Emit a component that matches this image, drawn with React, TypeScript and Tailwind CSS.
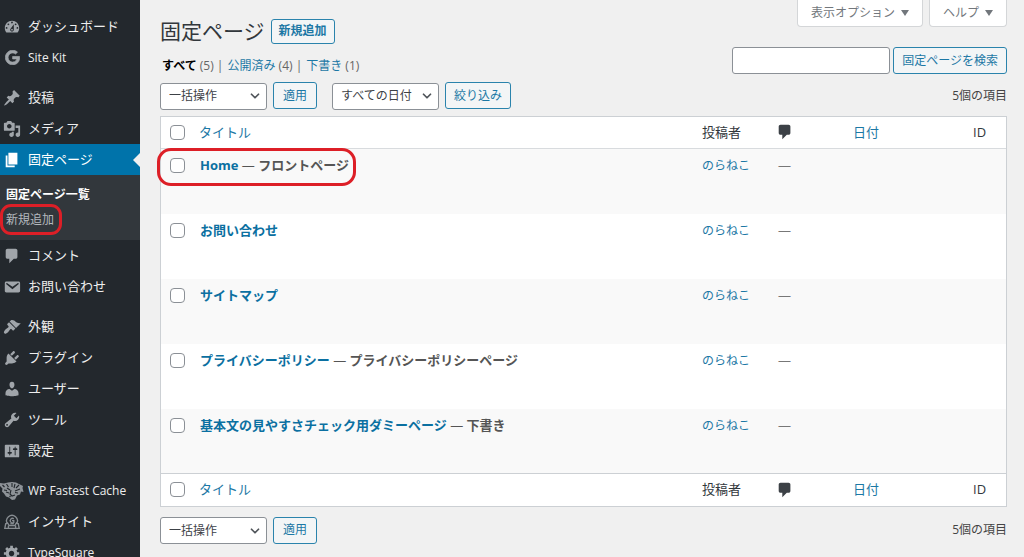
import { useState, type ReactNode } from "react";
import { ChevronDown } from "lucide-react";
import { FaGoogle } from "react-icons/fa";

type MenuItem = {
  label: string;
  icon: ReactNode;
  gap?: boolean;
  latin?: boolean;
  active?: boolean;
  children?: string[];
};

type PageRow = {
  title: string;
  state?: string;
  author: string;
  marked?: boolean;
};

const Dashicon = ({ d, className = "size-[18px]" }: { d: string; className?: string }) => (
  <svg viewBox="0 0 20 20" className={className} fill="currentColor" fillRule="evenodd" aria-hidden="true">
    <path d={d} />
  </svg>
);

const commentPath =
  "M5 2h9c1.1 0 2 .9 2 2v7c0 1.1-.9 2-2 2h-2l-5 5v-5H5c-1.1 0-2-.9-2-2V4c0-1.1.9-2 2-2z";

const TigerIcon = () => (
  <svg viewBox="0 0 24 20" className="h-5 w-6 shrink-0" aria-hidden="true">
    <path
      d="M0 2l4 .5L8 1.5 12 1l4 .5 3 1.5 4 2-.5 2 1 4-2.5-.5-1 3-3 1-2 4-3 .5-3-2.5-3-1-2-3-2-2 .5-3L0 5z"
      fill="currentColor"
      opacity=".85"
    />
    <path
      d="M2.500 4l2 2M4 9l3 .5M6.500 3l2 3M7 7l3 2M9 12l-3-1M12 2v4M15 3l-1 4M19 4l-3 3M20 8l-5 2M18 12l-3-.5M11 9l-1 4 2 2 3-1M9.500 16l1-1"
      fill="none"
      stroke="#23282d"
      strokeWidth="1.100"
    />
  </svg>
);

const InsightIcon = () => (
  <svg viewBox="0 0 20 20" className="size-[18px]" fill="none" stroke="currentColor" strokeWidth="1.5" opacity=".8" aria-hidden="true">
    <path d="M5 12a6 6 0 1 1 10 0M2 17l1-5 2-1 2 3h6l2-3 2 1 1 5zM6 17v-3M14 17v-3" />
    <path d="M12 6.500a2.500 2.500 0 1 0 0 4V8.500h-2M8 12h4" />
  </svg>
);

const menu: MenuItem[] = [
  {
    label: "ダッシュボード",
    icon: (
      <Dashicon d="M3.76 16h12.48c1.1-1.37 1.76-3.11 1.76-5 0-4.42-3.58-8-8-8s-8 3.58-8 8c0 1.89.66 3.63 1.76 5zM10 4c.55 0 1 .45 1 1s-.45 1-1 1-1-.45-1-1 .45-1 1-1zM6 6c.55 0 1 .45 1 1s-.45 1-1 1-1-.45-1-1 .45-1 1-1zm8 0c.55 0 1 .45 1 1s-.45 1-1 1-1-.45-1-1 .45-1 1-1zm-5.37 5.55L12 7v6c0 1.1-.9 2-2 2s-2-.9-2-2c0-.57.24-1.08.63-1.45zM4 10c.55 0 1 .45 1 1s-.45 1-1 1-1-.45-1-1 .45-1 1-1zm12 0c.55 0 1 .45 1 1s-.45 1-1 1-1-.45-1-1 .45-1 1-1zm-5 3c0-.55-.45-1-1-1s-1 .45-1 1 .45 1 1 1 1-.45 1-1z" />
    ),
  },
  {
    label: "Site Kit",
    latin: true,
    icon: (
      <FaGoogle className="size-[15px]" stroke="currentColor" strokeWidth={24} />
    ),
  },
  {
    label: "投稿",
    gap: true,
    icon: (
      <Dashicon d="M10.44 3.02l1.82-1.82 6.36 6.35-1.83 1.82c-1.05-.68-2.48-.57-3.41.36l-.75.75c-.92.93-1.04 2.35-.35 3.41l-1.83 1.82-2.41-2.41-2.8 2.79c-.42.42-3.38 2.71-3.8 2.29s1.86-3.39 2.28-3.81l2.79-2.79L4.1 9.36l1.83-1.82c1.05.69 2.48.57 3.4-.36l.75-.75c.93-.92 1.05-2.35.36-3.41z" />
    ),
  },
  {
    label: "メディア",
    icon: (
      <Dashicon d="M13 11V4c0-.55-.45-1-1-1h-1.67L9 1H5L3.67 3H2c-.55 0-1 .45-1 1v7c0 .55.45 1 1 1h10c.55 0 1-.45 1-1zM7 4.5c1.38 0 2.5 1.12 2.5 2.5S8.38 9.5 7 9.5 4.5 8.38 4.5 7 5.62 4.5 7 4.5zM14 6h5v10.5c0 1.38-1.12 2.5-2.5 2.5S14 17.88 14 16.5s1.12-2.5 2.5-2.5c.17 0 .34.02.5.05V9h-3V6zm-4 8.05V13h2v3.5c0 1.38-1.12 2.5-2.5 2.5S7 17.88 7 16.5 8.12 14 9.5 14c.17 0 .34.02.5.05z" />
    ),
  },
  {
    label: "固定ページ",
    active: true,
    children: ["固定ページ一覧", "新規追加"],
    icon: <Dashicon d="M6 15V2h10v13H6zm-1 1h8v2H3V5h2v11z" />,
  },
  { label: "コメント", icon: <Dashicon d={commentPath} /> },
  {
    label: "お問い合わせ",
    icon: (
      <Dashicon d="M3.87 4h13.25C18.37 4 19 4.59 19 5.79v8.42c0 1.19-.63 1.79-1.88 1.79H3.87c-1.25 0-1.88-.6-1.88-1.79V5.79c0-1.2.63-1.79 1.88-1.79zm6.62 8.6l6.74-5.53c.24-.2.43-.66.13-1.07-.29-.41-.82-.42-1.17-.17l-5.7 3.86L4.8 5.83c-.35-.25-.88-.24-1.17.17-.3.41-.11.87.13 1.07z" />
    ),
  },
  {
    label: "外観",
    gap: true,
    icon: (
      <Dashicon d="M14.48 11.06L7.41 3.99l1.5-1.5c.5-.56 2.3-.47 3.51.32 1.21.8 1.43 1.28 2.91 2.1 1.18.64 2.45 1.26 4.45.85zm-.71.71L6.7 4.7 4.93 6.47c-.39.39-.39 1.02 0 1.41l1.06 1.06c.39.39.39 1.03 0 1.42-.6.6-1.43 1.11-2.21 1.69-.35.26-.7.53-1.01.84C1.43 14.23.4 16.08 1.4 17.07c.99 1 2.84-.03 4.18-1.36.31-.31.58-.66.85-1.02.57-.78 1.08-1.61 1.69-2.21.39-.39 1.02-.39 1.41 0l1.06 1.06c.39.39 1.02.39 1.41 0z" />
    ),
  },
  {
    label: "プラグイン",
    icon: (
      <Dashicon d="M13.11 4.36L9.87 7.6 8 5.73l3.24-3.24c.35-.34 1.05-.2 1.56.32.52.51.66 1.21.31 1.55zm-8 1.77l.91-1.12 9.01 9.01-1.19.84c-.71.71-2.63 1.16-3.82 1.16H6.14L4.9 17.26c-.59.59-1.54.59-2.12 0-.59-.58-.59-1.53 0-2.12l1.24-1.24v-3.88c0-1.13.4-3.19 1.09-3.89zm7.26 3.97l3.24-3.24c.34-.35 1.04-.21 1.55.31.52.51.66 1.21.31 1.55l-3.24 3.25z" />
    ),
  },
  {
    label: "ユーザー",
    icon: (
      <Dashicon d="M10 9.25c-2.27 0-2.73-3.44-2.73-3.44C7 4.02 7.82 2 9.97 2c2.16 0 2.98 2.02 2.71 3.81 0 0-.41 3.44-2.68 3.44zm0 2.57L12.72 10c2.39 0 4.52 2.33 4.52 4.53v2.49s-3.65 1.13-7.24 1.13c-3.65 0-7.24-1.13-7.24-1.13v-2.49c0-2.25 1.94-4.48 4.47-4.48z" />
    ),
  },
  {
    label: "ツール",
    icon: (
      <Dashicon d="M16.68 9.77c-1.34 1.34-3.3 1.67-4.95.99l-5.41 6.52c-.99.99-2.59.99-3.58 0s-.99-2.59 0-3.57l6.52-5.42c-.68-1.65-.35-3.61.99-4.95 1.28-1.28 3.12-1.62 4.72-1.06l-2.89 2.89 2.82 2.82 2.86-2.87c.53 1.58.18 3.39-1.08 4.65zM3.81 16.21c.4.39 1.04.39 1.43 0 .4-.4.4-1.04 0-1.43-.39-.4-1.03-.4-1.43 0-.39.39-.39 1.03 0 1.43z" />
    ),
  },
  {
    label: "設定",
    icon: (
      <Dashicon d="M18 16V4c0-.55-.45-1-1-1H3c-.55 0-1 .45-1 1v12c0 .55.45 1 1 1h14c.55 0 1-.45 1-1zM8 11h1c.55 0 1 .45 1 1s-.45 1-1 1H8v1.5c0 .28-.22.5-.5.5s-.5-.22-.5-.5V13H6c-.55 0-1-.45-1-1s.45-1 1-1h1V5.5c0-.28.22-.5.5-.5s.5.22.5.5V11zm5-2h-1c-.55 0-1-.45-1-1s.45-1 1-1h1V5.5c0-.28.22-.5.5-.5s.5.22.5.5V7h1c.55 0 1 .45 1 1s-.45 1-1 1h-1v5.5c0 .28-.22.5-.5.5s-.5-.22-.5-.5V9z" />
    ),
  },
  { label: "WP Fastest Cache", gap: true, latin: true, icon: <TigerIcon /> },
  { label: "インサイト", icon: <InsightIcon /> },
  {
    label: "TypeSquare",
    latin: true,
    icon: (
      <Dashicon d="M18 12h-2.18c-.17.7-.44 1.35-.81 1.93l1.54 1.54-2.1 2.1-1.54-1.54c-.58.36-1.23.63-1.91.79V19H8v-2.18c-.68-.16-1.33-.43-1.91-.79l-1.54 1.54-2.12-2.12 1.54-1.54c-.36-.58-.63-1.23-.79-1.91H1V9.03h2.17c.16-.7.44-1.35.8-1.94L2.43 5.55l2.1-2.1 1.54 1.54c.58-.37 1.24-.64 1.93-.81V2h3v2.18c.68.16 1.33.43 1.91.79l1.54-1.54 2.12 2.12-1.54 1.54c.36.59.64 1.24.8 1.94H18V12zm-8.5 1.5c1.66 0 3-1.34 3-3s-1.34-3-3-3-3 1.34-3 3 1.34 3 3 3z" />
    ),
  },
];

const rows: PageRow[] = [
  { title: "Home", state: "フロントページ", author: "のらねこ", marked: true },
  { title: "お問い合わせ", author: "のらねこ" },
  { title: "サイトマップ", author: "のらねこ" },
  { title: "プライバシーポリシー", state: "プライバシーポリシーページ", author: "のらねこ" },
  { title: "基本文の見やすさチェック用ダミーページ", state: "下書き", author: "のらねこ" },
];

const buttonClass =
  "h-[27px] rounded-[3px] border border-[#2a83ac] bg-[#f3f5f6] text-xs text-[#1c78a5]";

const Sidebar = () => (
  <nav className="w-[140px] shrink-0 overflow-hidden bg-[#23282d] pt-[11px] text-[13px] text-[#eeeeee]">
    <ul>
      {menu.map((item) => (
        <li key={item.label} className={item.gap ? "mt-[9px]" : ""}>
          <a
            href="#"
            className={
              item.active
                ? "relative flex h-[31px] items-center bg-[#0073aa] text-white"
                : "flex h-[31px] items-center"
            }
          >
            <span
              className={
                item.active
                  ? "flex w-7 shrink-0 justify-center pr-1"
                  : "flex w-7 shrink-0 justify-center pr-1 text-[#a0a5aa]"
              }
            >
              {item.icon}
            </span>
            <span className={item.latin ? "text-xs whitespace-nowrap" : "whitespace-nowrap"}>
              {item.label}
            </span>
            {item.active && (
              <span className="absolute right-0 border-y-[7px] border-r-[7px] border-y-transparent border-r-[#f0f0f0]" />
            )}
          </a>
          {item.children && (
            <ul className="bg-[#32373c] pt-[7px] pb-2 text-xs">
              {item.children.map((child, i) => (
                <li key={child} className="relative">
                  <a
                    href="#"
                    className={
                      i === 0
                        ? "flex h-[25px] items-center px-[6px] font-bold text-white"
                        : "flex h-[25px] items-center px-[6px] text-[#b4b9be]"
                    }
                  >
                    {child}
                  </a>
                  {i === 1 && (
                    <span className="pointer-events-none absolute -inset-y-[3px] left-0 w-[62px] rounded-[11px] border-[3px] border-[#dd1f27]" />
                  )}
                </li>
              ))}
            </ul>
          )}
        </li>
      ))}
    </ul>
  </nav>
);

const Select = ({ label, options }: { label: string; options: string[] }) => (
  <div className="relative">
    <select
      aria-label={label}
      className="h-[27px] w-[107px] appearance-none rounded-[3px] border border-[#8b9096] bg-white px-2 text-xs text-[#3c4146]"
    >
      {options.map((option) => (
        <option key={option}>{option}</option>
      ))}
    </select>
    <ChevronDown className="pointer-events-none absolute top-[7px] right-[5px] size-[14px] text-[#50555a]" strokeWidth={3} />
  </div>
);

const Checkbox = ({ label }: { label: string }) => (
  <input
    type="checkbox"
    aria-label={label}
    className="block size-[15px] appearance-none rounded-[4px] border border-[#8b9096] bg-white checked:bg-[#0073aa]"
  />
);

const HeadRow = () => (
  <tr className="h-8 bg-white text-left text-[13px] text-[#32373c]">
    <th className="pl-[9px]">
      <Checkbox label="すべて選択" />
    </th>
    <th className="font-normal">
      <a href="#" className="text-[#1c78a5]">タイトル</a>
    </th>
    <th className="font-normal">投稿者</th>
    <th>
      <Dashicon d={commentPath} className="-ml-0.5 size-[18px] text-[#3c4146]" />
    </th>
    <th className="font-normal">
      <a href="#" className="text-[#1c78a5]">日付</a>
    </th>
    <th className="font-normal">ID</th>
  </tr>
);

const App = () => {
  const [query, setQuery] = useState("");

  return (
    <div className="flex h-screen overflow-hidden bg-[#f0f0f0] font-['Open_Sans','Noto_Sans_CJK_JP',sans-serif] text-[#444444]">
      <Sidebar />
      <main className="min-w-0 flex-1 overflow-hidden pr-[17px] pl-5">
        <div className="flex justify-between">
          <div className="pt-[18px]">
            <div className="flex items-center gap-[6px]">
              <h1 className="text-[21px] leading-[26px] text-[#32373c]">固定ページ</h1>
              <a
                href="#"
                className="flex h-[25px] items-center rounded-[3px] border border-[#2a83ac] bg-[#f3f5f6] px-[7px] text-xs font-bold text-[#1c78a5]"
              >
                新規追加
              </a>
            </div>
            <ul className="mt-3 flex gap-1 pl-0.5 text-xs leading-5 text-[#666666]">
              <li>
                <a href="#" className="font-bold text-black">すべて</a> (5) |
              </li>
              <li>
                <a href="#" className="text-[#1c78a5]">公開済み</a> (4) |
              </li>
              <li>
                <a href="#" className="text-[#1c78a5]">下書き</a> (1)
              </li>
            </ul>
          </div>
          <div className="flex flex-col items-end">
            <div className="flex gap-[6px] text-xs text-[#72777c]">
              {["表示オプション", "ヘルプ"].map((tab) => (
                <button
                  key={tab}
                  type="button"
                  className="flex h-[27px] items-center gap-[6px] rounded-b-[4px] border border-t-0 border-[#d4d6d8] bg-white px-[13px]"
                >
                  {tab}
                  <svg viewBox="0 0 8 6" className="h-[6px] w-2" fill="currentColor" aria-hidden="true">
                    <path d="M0 0h8L4 6z" />
                  </svg>
                </button>
              ))}
            </div>
            <div className="mt-5 flex gap-[3px]">
              <input
                type="search"
                aria-label="固定ページを検索"
                value={query}
                onChange={(e) => setQuery(e.target.value)}
                className="h-[27px] w-[158px] rounded-[3px] border border-[#8b9096] bg-white px-2 text-xs"
              />
              <button type="button" className={`${buttonClass} px-[8px]`}>
                固定ページを検索
              </button>
            </div>
          </div>
        </div>

        <div className="mt-[6px] flex items-center">
          <Select label="一括操作" options={["一括操作", "編集", "ゴミ箱へ移動"]} />
          <button type="button" className={`${buttonClass} ml-[6px] px-[9px]`}>適用</button>
          <div className="ml-[15px]">
            <Select label="日付で絞り込む" options={["すべての日付"]} />
          </div>
          <button type="button" className={`${buttonClass} ml-[6px] px-[8px]`}>絞り込み</button>
          <span className="ml-auto text-xs">5個の項目</span>
        </div>

        <div className="mt-[6px] border border-[#ccd0d4]">
          <table className="w-full table-fixed border-collapse">
            <colgroup>
              <col className="w-[38px]" />
              <col />
              <col className="w-[76px]" />
              <col className="w-[75px]" />
              <col className="w-[120px]" />
              <col className="w-[33px]" />
            </colgroup>
            <thead className="border-b border-[#d8dbde]">
              <HeadRow />
            </thead>
            <tbody className="text-[13px] leading-5">
              {rows.map((row) => (
                <tr key={row.title} className="h-[65px] bg-white align-top odd:bg-[#f9f9f9]">
                  <td className="pt-[9px] pl-[9px]">
                    <Checkbox label={`${row.title}を選択`} />
                  </td>
                  <td className="relative pt-[6px] pl-px font-bold text-[#555555]">
                    <a href="#" className="text-[#0b70a1]">{row.title}</a>
                    {row.state && (
                      <>
                        <span className="font-normal"> — </span>
                        {row.state}
                      </>
                    )}
                    {row.marked && (
                      <span className="pointer-events-none absolute -top-px -left-[42px] h-[38px] w-[199px] rounded-[14px] border-[3px] border-[#dd1f27]" />
                    )}
                  </td>
                  <td className="pt-[7px] text-xs leading-5">
                    <a href="#" className="text-[#1c78a5]">{row.author}</a>
                  </td>
                  <td className="pt-[6px] text-[#777777]">—</td>
                  <td />
                  <td />
                </tr>
              ))}
            </tbody>
            <tfoot className="border-t border-[#ccd0d4]">
              <HeadRow />
            </tfoot>
          </table>
        </div>

        <div className="mt-[10px] flex items-center">
          <Select label="一括操作 (下部)" options={["一括操作", "編集", "ゴミ箱へ移動"]} />
          <button type="button" className={`${buttonClass} ml-[6px] px-[9px]`}>適用</button>
          <span className="ml-auto text-xs">5個の項目</span>
        </div>
      </main>
    </div>
  );
};

export default App;
